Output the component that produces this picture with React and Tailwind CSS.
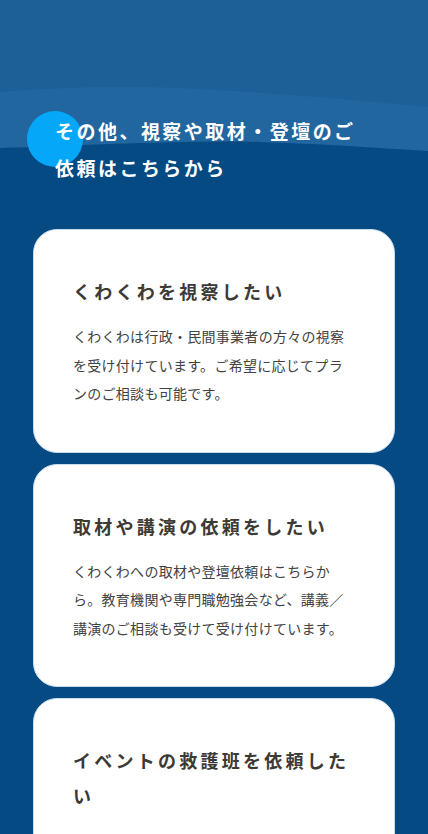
import React from 'react';

const requests = [
  {
    title: 'くわくわを視察したい',
    body: 'くわくわは行政・民間事業者の方々の視察を受け付けています。ご希望に応じてプランのご相談も可能です。',
  },
  {
    title: '取材や講演の依頼をしたい',
    body: 'くわくわへの取材や登壇依頼はこちらから。教育機関や専門職勉強会など、講義／講演のご相談も受けて受け付けています。',
  },
  {
    title: 'イベントの救護班を依頼したい',
    body: 'イベントでの救護班の派遣についてのご相談はこちらからお問い合わせください。',
  },
];

const RequestCard = ({ title, body }) => (
  <div className="rounded-[24px] border border-[#c9dded] bg-white px-[39px] pt-[44px] pb-[44px]">
    <h3 className="text-[18px] font-bold leading-[35px] tracking-[0.18em] text-[#3d3a35]">
      {title}
    </h3>
    <p className="mt-[13px] text-[14px] leading-[28.5px] tracking-[0.02em] text-[#424242]">
      {body}
    </p>
  </div>
);

export default function App() {
  return (
    <div
      className="min-h-screen bg-[#064a83] pb-10"
      style={{ fontFamily: '"Noto Sans CJK JP", "Noto Sans", sans-serif' }}
    >
      {/* 見出し */}
      <section className="relative pt-[112px]">
        <svg
          className="absolute inset-x-0 top-0 h-[160px] w-full"
          viewBox="0 0 428 160"
          preserveAspectRatio="none"
        >
          <rect width="428" height="160" fill="#1d5f97" />
          <path
            d="M0 92 C 50 88, 100 86, 150 87 C 250 90, 350 100, 428 107 L428 160 L0 160 Z"
            fill="#2266a0"
          />
          <path
            d="M0 148 C 80 146, 180 140, 260 142 C 330 144, 390 149, 428 151 L428 160 L0 160 Z"
            fill="#064a83"
          />
        </svg>
        <div className="absolute left-[27px] top-[111px] h-[56px] w-[56px] rounded-full bg-[#05a8f8]" />
        <h2 className="relative pl-[55px] pr-[65px] text-[19px] font-bold leading-[37px] tracking-[0.13em] text-white">
          その他、視察や取材・登壇のご依頼はこちらから
        </h2>
      </section>

      {/* カード一覧 */}
      <div className="mt-[43px] flex flex-col gap-[11px] px-[33px]">
        {requests.map((r) => (
          <RequestCard key={r.title} title={r.title} body={r.body} />
        ))}
      </div>
    </div>
  );
}
